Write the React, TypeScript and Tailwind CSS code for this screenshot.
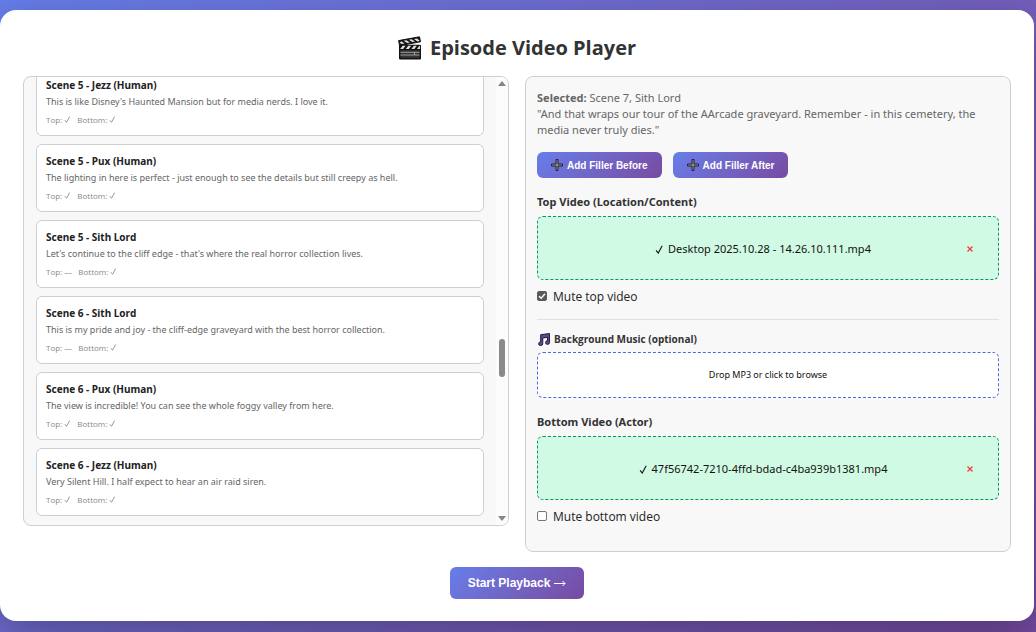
import type { ReactNode } from "react";

type Scene = { title: string; line: string; top: string; bottom: string };

const scenes: Scene[] = [
  { title: "Scene 5 - Jezz (Human)", line: "This is like Disney's Haunted Mansion but for media nerds. I love it.", top: "✓", bottom: "✓" },
  { title: "Scene 5 - Pux (Human)", line: "The lighting in here is perfect - just enough to see the details but still creepy as hell.", top: "✓", bottom: "✓" },
  { title: "Scene 5 - Sith Lord", line: "Let's continue to the cliff edge - that's where the real horror collection lives.", top: "—", bottom: "✓" },
  { title: "Scene 6 - Sith Lord", line: "This is my pride and joy - the cliff-edge graveyard with the best horror collection.", top: "—", bottom: "✓" },
  { title: "Scene 6 - Pux (Human)", line: "The view is incredible! You can see the whole foggy valley from here.", top: "✓", bottom: "✓" },
  { title: "Scene 6 - Jezz (Human)", line: "Very Silent Hill. I half expect to hear an air raid siren.", top: "✓", bottom: "✓" },
];

function Check({ className }: { className: string }) {
  return (
    <svg viewBox="0 0 10 10" className={className} fill="none" stroke="currentColor" role="img" aria-label="set">
      <path d="M1.2 6 3.6 9 8 .8" strokeWidth="1.2" />
    </svg>
  );
}

function Mark({ value }: { value: string }) {
  return value === "✓" ? <Check className="inline size-[7px] align-baseline" /> : <span>{value}</span>;
}

function Clapper() {
  return (
    <svg viewBox="0 0 24 24" className="size-6 shrink-0" aria-hidden="true">
      <path d="M.6 4.6 21.5.8l1 5L1.6 9.6z" fill="#111" stroke="#111" strokeWidth="1" strokeLinejoin="round" />
      <path d="M3.2 5.2l3.5 2.3-3 .5-2-1.3zM8.4 4.2l3.5 2.3-2.8.5L5.6 4.7zM13.6 3.3l3.5 2.3-2.8.5-3.5-2.3zM18.8 2.4l2.6 1.8-.3 1-1.7.2-3.4-2.4z" fill="#ddd" />
      <rect x="1" y="8.8" width="22" height="14.6" rx="1" fill="#111" />
      <path d="M2.2 13 4.6 9.8h3L5.2 13zM7.8 13l2.4-3.2h3L10.8 13zM13.4 13l2.4-3.2h3L16.4 13zM19 13l2.4-3.2h.6V13z" fill="#ddd" />
      <rect x="2.4" y="14.2" width="19.2" height="7.8" fill="#333" />
      <path d="M2.4 16.3h19.2M2.4 19h19.2M16.5 16.3V19" stroke="#aaa" strokeWidth=".9" />
    </svg>
  );
}

function Plus() {
  return (
    <svg viewBox="0 0 12 12" className="size-3 shrink-0" aria-hidden="true">
      <path d="M5 .5h2V5h4.5v2H7v4.5H5V7H.5V5H5z" fill="#8c8c8c" stroke="#1c1c30" strokeWidth=".9" />
    </svg>
  );
}

function Notes() {
  return (
    <svg viewBox="0 0 12 12" className="size-[13px] shrink-0" aria-hidden="true">
      <path d="M3.4 1.6 11.5.5v8.2a1.8 1.7 0 1 1-1.8-1.6V4L5.3 4.6v5.2a1.9 1.7 0 1 1-1.9-1.6z" fill="#5b4a94" stroke="#1b1733" strokeWidth=".9" />
    </svg>
  );
}

function SceneCard({ scene }: { scene: Scene }) {
  return (
    <li className="shrink-0">
      <button type="button" className="block w-full rounded-md border border-[#cfcfcf] bg-white px-[9px] py-2 text-left">
        <span className="block font-['Noto_Sans',sans-serif] text-[10px] leading-4 font-bold text-[#222]">{scene.title}</span>
        <span className="block font-['Noto_Sans',sans-serif] text-[9px] leading-[18px] text-[#666]">{scene.line}</span>
        <span className="mt-0.5 flex gap-[6px] text-[8px] leading-[14px] text-[#888]">
          <span>Top: <Mark value={scene.top} /></span>
          <span>Bottom: <Mark value={scene.bottom} /></span>
        </span>
      </button>
    </li>
  );
}

function FillerButton({ children }: { children: ReactNode }) {
  return (
    <button type="button" className="flex h-[26px] items-center gap-1 rounded-md bg-linear-135 from-[#667eea] to-[#764ba2] px-[14px] font-['Liberation_Sans',sans-serif] text-[10px] font-bold text-white">
      <Plus />
      {children}
    </button>
  );
}

function VideoSlot({ file }: { file: string }) {
  return (
    <div className="flex h-16 items-center rounded-md border border-dashed border-[#059669] bg-[#d1fae5] pt-0.5 pr-6 pl-[22px] font-['Noto_Sans',sans-serif] text-[11px] text-[#111]">
      <span className="flex flex-1 items-center justify-center gap-1">
        <Check className="size-[9px]" />
        {file}
      </span>
      <button type="button" aria-label={"Remove " + file} className="flex w-2 justify-center text-[#ef4444]">
        <svg viewBox="0 0 8 8" className="size-2 shrink-0" aria-hidden="true">
          <path d="M1.5 1.5 6.5 6.5M6.5 1.5 1.5 6.5" stroke="currentColor" strokeWidth="1.4" />
        </svg>
      </button>
    </div>
  );
}

function MuteToggle({ label, checked }: { label: string; checked?: boolean }) {
  return (
    <label className="mt-2 flex h-[18px] items-center gap-[6px] text-xs text-[#222]">
      <span className="relative mb-0.5 flex size-[10px]">
        <input type="checkbox" defaultChecked={checked} className="peer size-[10px] appearance-none rounded-xs border border-[#767676] bg-white checked:border-[#5a5a5a] checked:bg-[#5a5a5a]" />
        <svg viewBox="0 0 10 10" className="pointer-events-none absolute inset-0 hidden size-[10px] peer-checked:block" fill="none" aria-hidden="true">
          <path d="M2 5.2 4.2 7.3 8 2.8" stroke="#fff" strokeWidth="1.4" />
        </svg>
      </span>
      {label}
    </label>
  );
}

export default function App() {
  return (
    <div className="min-h-screen bg-linear-135 from-[#667eea] to-[#764ba2] pt-[10px] pr-[2px] pb-[11px] font-['Open_Sans','Noto_Sans',sans-serif]">
      <main className="rounded-2xl bg-white px-[23px] pt-[22px] pb-[22px] shadow-[0_15px_45px_rgba(0,0,0,0.3)]">
        <h1 className="flex h-8 items-center justify-center gap-2 text-xl font-bold text-[#333]">
          <Clapper />
          Episode Video Player
        </h1>

        <div className="mt-3 grid grid-cols-2 items-start gap-4">
          <section aria-label="Scenes" className="flex h-[450px] overflow-hidden rounded-lg border border-[#cfcfcf] bg-[#f8f8f8]">
            <ul className="flex min-w-0 flex-1 flex-col justify-end gap-2 pr-3 pb-[9px] pl-3">
              {scenes.map((scene) => (
                <SceneCard key={scene.title} scene={scene} />
              ))}
            </ul>
            <div className="flex w-3 flex-col items-center justify-between bg-[#fcfcfc] pt-1 pb-1" aria-hidden="true">
              <svg viewBox="0 0 8 5" className="h-[5px] w-2"><path d="M0 5 4 0 8 5z" fill="#858585" /></svg>
              <div className="flex w-full flex-1 flex-col items-center">
                <div className="flex-[252]" />
                <div className="h-[38px] w-[6px] rounded-full bg-[#8a8a8a]" />
                <div className="flex-[138]" />
              </div>
              <svg viewBox="0 0 8 5" className="h-[5px] w-2"><path d="M0 0 4 5 8 0z" fill="#858585" /></svg>
            </div>
          </section>

          <section aria-label="Selected scene" className="rounded-lg border border-[#cfcfcf] bg-[#f8f8f8] px-[11px] pt-[13px] pb-[25px] text-[#333]">
            <p className="font-['Noto_Sans',sans-serif] text-[11px] leading-4 text-[#666]">
              <strong>Selected:</strong> Scene 7, Sith Lord
              <br />
              "And that wraps our tour of the AArcade graveyard. Remember - in this cemetery, the media never truly dies."
            </p>

            <div className="mt-[14px] flex gap-[11px]">
              <FillerButton>Add Filler Before</FillerButton>
              <FillerButton>Add Filler After</FillerButton>
            </div>

            <h2 className="mt-4 mb-[6px] font-['Noto_Sans',sans-serif] text-[11px] leading-4 font-bold">Top Video (Location/Content)</h2>
            <VideoSlot file="Desktop 2025.10.28 - 14.26.10.111.mp4" />
            <MuteToggle label="Mute top video" checked />

            <div className="mt-[13px] border-t border-[#e0e0e0] pt-[11px]">
              <h3 className="flex h-4 items-center gap-1 text-[10px] font-bold">
                <Notes />
                Background Music (optional)
              </h3>
              <button type="button" className="mt-[5px] h-[46px] w-full rounded-md border border-dashed border-[#4f67e0] bg-white font-['Noto_Sans',sans-serif] text-[9px] text-[#111]">
                Drop MP3 or click to browse
              </button>
            </div>

            <h2 className="mt-4 mb-[6px] font-['Noto_Sans',sans-serif] text-[11px] leading-4 font-bold">Bottom Video (Actor)</h2>
            <VideoSlot file="47f56742-7210-4ffd-bdad-c4ba939b1381.mp4" />
            <MuteToggle label="Mute bottom video" />
          </section>
        </div>

        <div className="mt-[15px] flex justify-center">
          <button type="button" className="flex h-8 items-center gap-1 rounded-md bg-linear-135 from-[#667eea] to-[#764ba2] px-[18px] font-['Liberation_Sans',sans-serif] text-xs font-bold text-white">
            Start Playback
            <svg viewBox="0 0 12 8" className="h-2 w-3" fill="none" stroke="currentColor" strokeWidth="1" aria-hidden="true">
              <path d="M0 4.5h11M8.5 2 11 4.5 8.5 7" />
            </svg>
          </button>
        </div>
      </main>
    </div>
  );
}
